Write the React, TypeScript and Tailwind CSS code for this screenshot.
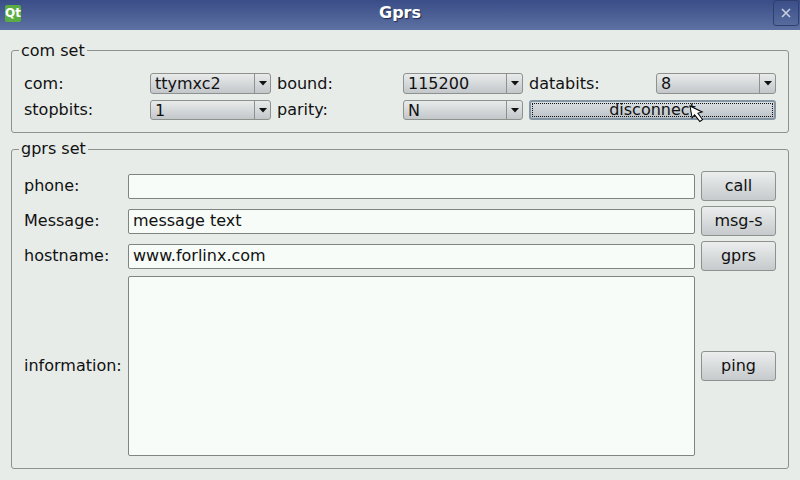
const font = { fontFamily: '"DejaVu Sans", sans-serif' };

function Combo({ value, w }: { value: string; w: string }) {
  return (
    <div className={`${w} h-full flex rounded-[3px] border border-[#8d928f] bg-gradient-to-b from-[#e9ebeb] to-[#c3c7ca] text-[#111]`}>
      <div className="flex-1 pl-1 leading-[19px] overflow-hidden">{value}</div>
      <div className="w-[16px] border-l border-[#8d928f] flex items-center justify-center">
        <svg width="8" height="5" viewBox="0 0 8 5"><path d="M0 0H8L4 4.5Z" fill="#111" /></svg>
      </div>
    </div>
  );
}

function Btn({ label }: { label: string }) {
  return (
    <div className="w-[75px] h-[30px] shrink-0 flex items-center justify-center rounded-[3px] border border-[#8d928f] bg-gradient-to-b from-[#eceeee] to-[#c6cacc] text-[#111]">
      {label}
    </div>
  );
}

function Field({ value }: { value: string }) {
  return (
    <div className="flex-1 h-[25px] rounded-[2px] border border-[#7f8582] bg-[#f7fcf8] pl-1 leading-[21px] text-[#111]">{value}</div>
  );
}

function Row({ label, value, btn }: { label: string; value: string; btn: string }) {
  return (
    <div className="flex items-center h-[30px]">
      <div className="w-[104px] shrink-0">{label}</div>
      <Field value={value} />
      <div className="w-[6px] shrink-0" />
      <Btn label={btn} />
    </div>
  );
}

export default function App() {
  return (
    <div className="relative w-[800px] h-[480px] overflow-hidden bg-[#e8ece9] text-[16px] text-[#111]" style={font}>
      <div className="h-[30px] grid grid-cols-[1fr_auto_1fr] items-center bg-gradient-to-b from-[#3a4d88] to-[#5d71a2]">
        <div className="pl-[5px]">
          <div className="w-[16px] h-[17px] mb-[3px] rounded-[2px] bg-[#5aad42] text-white text-[12px] font-bold leading-[17px] text-center">Qt</div>
        </div>
        <div className="text-white font-bold text-[16px] leading-[26px] pb-[4px] [text-shadow:1px_1px_1px_#1f2a50]">Gprs</div>
        <div className="flex justify-end items-start h-full pr-[1px]">
          <div className="w-[26px] h-[26px] border border-[#2f3f70] rounded-[3px] flex items-center justify-center">
            <svg width="12" height="12" viewBox="0 0 12 12"><path d="M2 2L10 10M10 2L2 10" stroke="#c9d0de" strokeWidth="1.6" /></svg>
          </div>
        </div>
      </div>

      <div className="px-[11px] pt-[20px]">
        <div className="relative h-[83px] rounded-[3px] border border-[#8d928f] pl-[12px] pr-[12px] pt-[22px]">
          <div className="absolute left-[7px] top-[-10px] px-[2px] bg-[#e8ece9] leading-[19px]">com set</div>
          <div className="grid grid-cols-[126px_121px_132px_120px_133px_120px] grid-rows-[21px_20px] gap-y-[6px] items-center">
            <div className="pt-[1px]">com:</div>
            <Combo value="ttymxc2" w="w-[121px]" />
            <div className="pl-[6px] pt-[1px]">bound:</div>
            <Combo value="115200" w="w-[120px]" />
            <div className="pl-[6px] pt-[1px]">databits:</div>
            <Combo value="8" w="w-[120px]" />
            <div>stopbits:</div>
            <Combo value="1" w="w-[121px]" />
            <div className="pl-[6px]">parity:</div>
            <Combo value="N" w="w-[120px]" />
            <div className="col-span-2 pl-[6px] h-full">
              <div className="h-full rounded-[3px] border-2 border-[#8496a3] bg-gradient-to-b from-[#dadfe2] to-[#bcc3c8] p-[1px]">
                <div className="h-full border border-dotted border-[#111] flex items-center justify-center leading-none">disconnect</div>
              </div>
            </div>
          </div>
        </div>

        <div className="relative mt-[16px] h-[320px] rounded-[3px] border border-[#8d928f] pl-[12px] pr-[12px] pt-[21px]">
          <div className="absolute left-[7px] top-[-11px] px-[2px] bg-[#e8ece9] leading-[19px]">gprs set</div>
          <div className="flex flex-col gap-[5px]">
            <Row label="phone:" value="" btn="call" />
            <Row label="Message:" value="message text" btn="msg-s" />
            <Row label="hostname:" value="www.forlinx.com" btn="gprs" />
          </div>
          <div className="flex items-center h-[180px] mt-[5px]">
            <div className="w-[104px] shrink-0">information:</div>
            <div className="flex-1 h-full rounded-[2px] border border-[#7f8582] bg-[#f7fcf8]" />
            <div className="w-[6px] shrink-0" />
            <Btn label="ping" />
          </div>
        </div>
      </div>

      <svg className="absolute left-[689px] top-[105px]" width="16" height="20" viewBox="0 0 16 20">
        <path d="M1 1L1 13L4 10.5L8 18L11 16.5L7.5 9.5L12 9Z" transform="rotate(-10 1 1)" fill="#fff" stroke="#000" strokeWidth="1" />
      </svg>
    </div>
  );
}
